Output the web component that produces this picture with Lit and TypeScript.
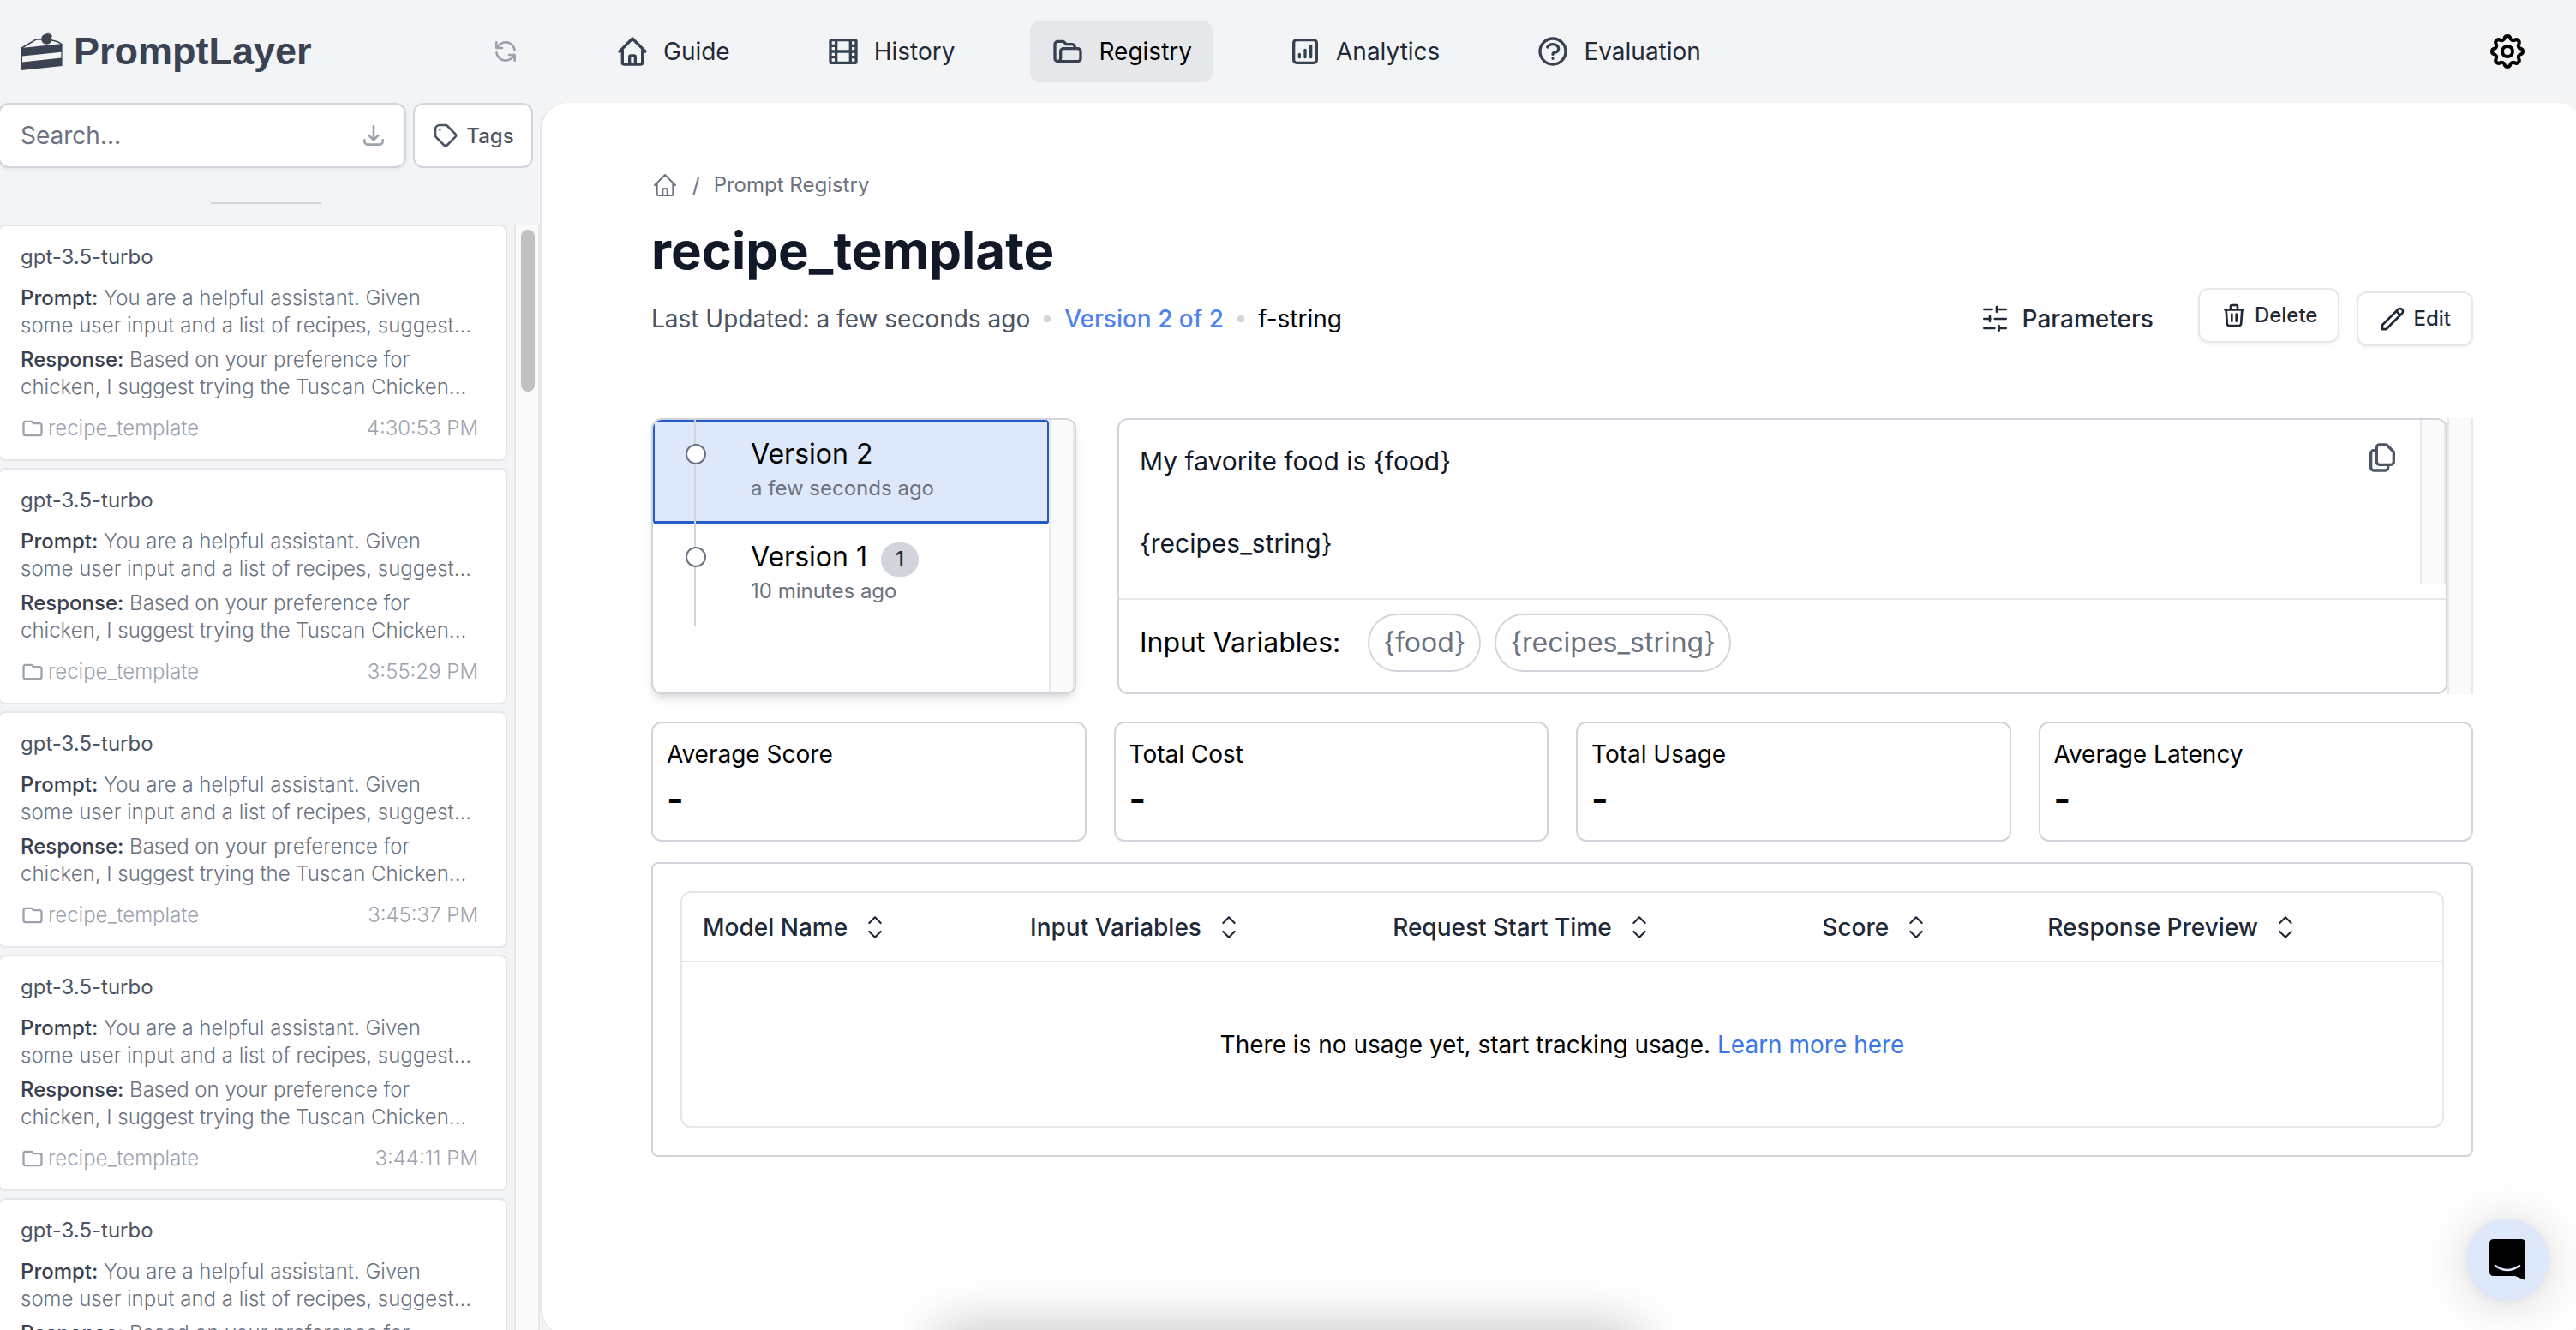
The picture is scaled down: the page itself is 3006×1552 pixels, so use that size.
import { LitElement, html, css, svg } from "lit";
import { customElement, property, state } from "lit/decorators.js";
import { classMap } from "lit/directives/class-map.js";

const ICONS: Record<string, string> = {
  home: "M3 12l2-2m0 0l7-7 7 7M5 10v10a1 1 0 001 1h3m10-11l2 2m-2-2v10a1 1 0 01-1 1h-3m-6 0a1 1 0 001-1v-4a1 1 0 011-1h2a1 1 0 011 1v4a1 1 0 001 1m-6 0h6",
  film: "M7 4v16M17 4v16M3 8h4m10 0h4M3 12h18M3 16h4m10 0h4M4 20h16a1 1 0 001-1V5a1 1 0 00-1-1H4a1 1 0 00-1 1v14a1 1 0 001 1z",
  folderOpen: "M5 19a2 2 0 01-2-2V7a2 2 0 012-2h4l2 2h4a2 2 0 012 2v1M5 19h14a2 2 0 002-2v-5a2 2 0 00-2-2H9a2 2 0 00-2 2v5a2 2 0 01-2 2z",
  chart: "M16 8v8m-4-5v5m-4-2v2m-2 4h12a2 2 0 002-2V6a2 2 0 00-2-2H6a2 2 0 00-2 2v12a2 2 0 002 2z",
  question: "M8.228 9c.549-1.165 2.03-2 3.772-2 2.21 0 4 1.343 4 3 0 1.4-1.278 2.575-3.006 2.907-.542.104-.994.54-.994 1.093m0 3h.01M21 12a9 9 0 11-18 0 9 9 0 0118 0z",
  refresh: "M4 4v5h.582m15.356 2A8.001 8.001 0 004.582 9m0 0H9m11 11v-5h-.581m0 0a8.003 8.003 0 01-15.357-2m15.357 2H15",
  download: "M4 16v1a3 3 0 003 3h10a3 3 0 003-3v-1m-4-4l-4 4m0 0l-4-4m4 4V4",
  tag: "M7 7h.01M7 3h5c.512 0 1.024.195 1.414.586l7 7a2 2 0 010 2.828l-7 7a2 2 0 01-2.828 0l-7-7A1.994 1.994 0 013 12V7a4 4 0 014-4z",
  folder: "M3 7v10a2 2 0 002 2h14a2 2 0 002-2V9a2 2 0 00-2-2h-6l-2-2H5a2 2 0 00-2 2z",
  trash: "M19 7l-.867 12.142A2 2 0 0116.138 21H7.862a2 2 0 01-1.995-1.858L5 7m5 4v6m4-6v6m1-10V4a1 1 0 00-1-1h-4a1 1 0 00-1 1v3M4 7h16",
  pencil: "M15.232 5.232l3.536 3.536m-2.036-5.036a2.5 2.5 0 113.536 3.536L6.5 21.036H3v-3.572L16.732 3.732z",
  selector: "M8 9l4-4 4 4m0 6l-4 4-4-4",
  copy: "M8 7v8a2 2 0 002 2h6M8 7V5a2 2 0 012-2h4.586a1 1 0 01.707.293l4.414 4.414a1 1 0 01.293.707V15a2 2 0 01-2 2h-2M8 7H6a2 2 0 00-2 2v10a2 2 0 002 2h8a2 2 0 002-2v-2",
  cog: "M10.325 4.317c.426-1.756 2.924-1.756 3.35 0a1.724 1.724 0 002.573 1.066c1.543-.94 3.31.826 2.37 2.37a1.724 1.724 0 001.065 2.572c1.756.426 1.756 2.924 0 3.35a1.724 1.724 0 00-1.066 2.573c.94 1.543-.826 3.31-2.37 2.37a1.724 1.724 0 00-2.572 1.065c-.426 1.756-2.924 1.756-3.35 0a1.724 1.724 0 00-2.573-1.066c-1.543.94-3.31-.826-2.37-2.37a1.724 1.724 0 00-1.065-2.572c-1.756-.426-1.756-2.924 0-3.35a1.724 1.724 0 001.066-2.573c-.94-1.543.826-3.31 2.37-2.37.996.608 2.296.07 2.572-1.065z M15 12a3 3 0 11-6 0 3 3 0 016 0z",
  sliders: "M2.5 3.75h6.9M13.5 1.6v4.3M13.5 3.75h8M2.5 12h5.3M7.5 9.9v4.2M11.8 12h9.7M2.5 20.25h9M15.4 18.1v4.3M15.4 20.25h6.1",
};

@customElement("line-icon")
export class LineIcon extends LitElement {
  static styles = css`
    :host { display: inline-flex; flex: none; width: 32px; height: 32px; }
    .glyph { width: 100%; height: 100%; fill: none; stroke: currentColor; stroke-linecap: round; stroke-linejoin: round; }
  `;
  @property() name = "home";
  @property({ type: Number }) weight = 2;

  render() {
    return html`<svg class="glyph" viewBox="0 0 24 24" aria-hidden="true" stroke-width=${this.weight}>
      ${svg`<path d=${ICONS[this.name]}></path>`}
    </svg>`;
  }
}

interface RequestEntry { time: string; }

const REQUESTS: RequestEntry[] = [
  { time: "4:30:53 PM" },
  { time: "3:55:29 PM" },
  { time: "3:45:37 PM" },
  { time: "3:44:11 PM" },
  { time: "3:41:52 PM" },
];

@customElement("request-sidebar")
export class RequestSidebar extends LitElement {
  static styles = css`
    :host { display: flex; flex-direction: column; min-height: 0; margin-left: -2px; }
    * { box-sizing: border-box; }
    button { font: inherit; color: inherit; cursor: pointer; }
    .tools { display: flex; gap: 8px; padding-right: 8px; }
    .search { flex: 1; min-width: 0; height: 76px; display: flex; align-items: center; background: #fff; border: 2px solid #d1d5db; border-radius: 12px; padding: 0 20px 0 24px; box-shadow: 0 2px 4px rgba(0, 0, 0, 0.05); }
    .field { flex: 1; min-width: 0; border: 0; outline: 0; padding: 0; background: none; font: 400 28px/40px Inter, sans-serif; color: #374151; }
    .field::placeholder { color: #6b7280; opacity: 1; }
    .plain { border: 0; background: none; padding: 0; display: flex; color: #9ca3af; }
    .tags { height: 76px; width: 140px; display: flex; align-items: center; justify-content: center; gap: 8px; background: #fff; border: 2px solid #d1d5db; border-radius: 12px; padding: 0; font-size: 24px; font-weight: 500; color: #4b5563; }
    .rule { width: 128px; height: 2px; border: 0; margin: 40px 0 24px 248px; background: #d1d5db; }
    .scroller { flex: 1; min-height: 0; display: flex; gap: 8px; overflow: hidden; }
    .list { flex: 1; min-width: 0; margin: 0; padding: 0; list-style: none; display: flex; flex-direction: column; gap: 8px; }
    .card { flex: none; background: #fff; border: 2px solid #e5e7eb; border-radius: 8px; padding: 20px 32px 20px 24px; font-size: 24px; line-height: 32px; color: #6b7280; font-weight: 300; }
    .model { margin: 0 0 16px; color: #4b5563; font-weight: 400; }
    .excerpt { margin: 0 0 8px; }
    .excerpt b { font-weight: 500; color: #374151; }
    .foot { display: flex; align-items: center; gap: 4px; margin-top: 16px; color: #9ca3af; }
    .foot line-icon { width: 28px; height: 28px; }
    .time { margin-left: auto; }
    .track { flex: none; width: 30px; background: #fafafa; border: solid #e8e8e8; border-width: 0 2px; padding: 6px 4px 6px 6px; }
    .thumb { width: 16px; height: 189px; border-radius: 8px; background: #c1c1c1; }
  `;

  render() {
    return html`
      <div class="tools">
        <div class="search">
          <input class="field" type="text" aria-label="Search requests" placeholder="Search..." />
          <button class="plain" aria-label="Download requests"><line-icon name="download"></line-icon></button>
        </div>
        <button class="tags"><line-icon name="tag"></line-icon>Tags</button>
      </div>
      <hr class="rule" />
      <div class="scroller">
        <ul class="list">
          ${REQUESTS.map((r) => html`
            <li class="card">
              <p class="model">gpt-3.5-turbo</p>
              <p class="excerpt"><b>Prompt:</b> You are a helpful assistant. Given<br />some user input and a list of recipes, suggest...</p>
              <p class="excerpt"><b>Response:</b> Based on your preference for<br />chicken, I suggest trying the Tuscan Chicken...</p>
              <div class="foot"><line-icon name="folder"></line-icon><span>recipe_template</span><span class="time">${r.time}</span></div>
            </li>`)}
        </ul>
        <div class="track"><div class="thumb"></div></div>
      </div>
    `;
  }
}

@customElement("template-page")
export class TemplatePage extends LitElement {
  static styles = css`
    :host { display: block; }
    * { box-sizing: border-box; }
    button { font: inherit; color: inherit; cursor: pointer; }
    a { text-decoration: none; color: inherit; }
    .crumbs { display: flex; align-items: center; gap: 16px; height: 32px; font-size: 24px; line-height: 32px; color: #6b7280; }
    .crumbs a { display: flex; }
    .title { margin: 24px 0 8px; font-size: 60px; line-height: 72px; font-weight: 700; color: #111827; }
    .bar { display: flex; align-items: center; justify-content: space-between; font-size: 28px; line-height: 40px; }
    .meta { display: flex; align-items: center; gap: 16px; color: #4b5563; }
    .dot { width: 8px; height: 8px; border-radius: 50%; background: #d1d5db; }
    .current { color: #4f83f1; font-weight: 500; }
    .format { color: #000; }
    .actions { display: flex; align-items: center; gap: 20px; color: #1f2937; font-weight: 500; }
    .params { display: flex; align-items: center; gap: 16px; border: 0; background: none; padding: 0; margin-right: 32px; }
    .action { height: 64px; display: flex; align-items: center; gap: 8px; background: #fff; border: 2px solid #e5e7eb; border-radius: 12px; padding: 0 24px; font-size: 24px; box-shadow: 0 2px 4px rgba(0, 0, 0, 0.05); }
    .raised { margin-bottom: 8px; }

    .panes { display: flex; gap: 48px; margin-top: 80px; }
    .versions { width: 496px; flex: none; display: flex; background: #fff; border: 2px solid #d1d5db; border-radius: 12px; overflow: hidden; box-shadow: 0 8px 12px -2px rgba(0, 0, 0, 0.1), 0 4px 8px -4px rgba(0, 0, 0, 0.1); }
    .timeline { flex: 1; margin: 0; padding: 0; list-style: none; }
    .entry { position: relative; }
    .entry::after { content: ""; position: absolute; top: 0; bottom: 0; left: 48px; width: 2px; background: #d1d5db; }
    .pick { width: 100%; height: 120px; display: flex; align-items: flex-start; text-align: left; background: none; border: 2px solid transparent; border-radius: 4px; padding: 16px 24px 0 36px; gap: 52px; }
    .pick.on { background: #dee8fb; border-color: #255bc9; height: 122px; margin-bottom: -2px; border-bottom-width: 4px; }
    .node { position: relative; z-index: 1; flex: none; width: 24px; height: 24px; margin-top: 10px; border: 2px solid #6b7280; border-radius: 50%; background: #fff; }
    .label { display: flex; align-items: baseline; gap: 16px; height: 44px; font-size: 32px; line-height: 44px; color: #000; }
    .count { min-width: 44px; height: 40px; border-radius: 20px; background: #d1d5db; font-size: 24px; line-height: 40px; font-weight: 500; text-align: center; color: #1f2937; }
    .when { display: block; font-size: 24px; line-height: 36px; color: #6b7280; }
    .track { flex: none; width: 30px; background: #fafafa; border: solid #e8e8e8; border-width: 0 2px; }

    .right { flex: 1; min-width: 0; display: flex; }
    .editor { flex: 1; min-width: 0; border: 2px solid #d1d5db; border-radius: 12px; overflow: hidden; font-size: 32px; color: #111827; }
    .source { display: flex; margin-bottom: 16px; }
    .code { flex: 1; margin: 0; padding: 24px; font: inherit; font-size: 30px; line-height: 48px; white-space: pre-wrap; }
    .copy { align-self: flex-start; border: 0; background: none; padding: 24px 24px 0 0; color: #4b5563; display: flex; }
    .copy line-icon { width: 40px; height: 40px; }
    .inputs { display: flex; align-items: center; gap: 16px; border-top: 2px solid #e5e7eb; padding: 16px 24px 24px; line-height: 48px; color: #000; }
    .inputs-label { margin-right: 16px; }
    .pill { border: 2px solid #d1d5db; border-radius: 34px; padding: 8px 16px; color: #6b7280; }

    .stats { display: grid; grid-template-columns: repeat(4, 1fr); gap: 32px; margin: 32px 0 24px; }
    .stat { margin: 0; border: 2px solid #d1d5db; border-radius: 12px; padding: 16px; font-size: 28px; line-height: 40px; color: #000; }
    .stat dt, .stat dd { margin: 0; }
    .stat dd { font-size: 42px; line-height: 64px; font-weight: 700; }

    .usage { border: 2px solid #d1d5db; border-radius: 8px; padding: 32px; }
    .frame { border: 2px solid #e5e7eb; border-radius: 12px; overflow: hidden; }
    .table { width: 100%; border-collapse: collapse; table-layout: fixed; font-size: 28px; line-height: 40px; }
    .table th { height: 80px; padding: 0 24px; border-bottom: 2px solid #e5e7eb; text-align: left; font-weight: 500; color: #1f2937; }
    .c1 { width: 18.6%; } .c2 { width: 20.6%; } .c3 { width: 24.4%; } .c4 { width: 12.8%; } .c5 { width: 23.6%; }
    .sort { display: flex; align-items: center; gap: 12px; border: 0; padding: 0; background: none; white-space: nowrap; }
    .sort line-icon { width: 40px; height: 40px; }
    .table td { height: 192px; padding: 0; text-align: center; color: #000; }
    .learn { color: #3b78e7; }
  `;

  @state() private selected = 2;

  render() {
    const columns = ["Model Name", "Input Variables", "Request Start Time", "Score", "Response Preview"];
    const stats = ["Average Score", "Total Cost", "Total Usage", "Average Latency"];
    const versions = [
      { id: 2, when: "a few seconds ago", count: 0 },
      { id: 1, when: "10 minutes ago", count: 1 },
    ];
    return html`
      <nav class="crumbs" aria-label="Breadcrumb">
        <a href="#home" aria-label="Home"><line-icon name="home" weight="1.5"></line-icon></a>
        <span>/</span>
        <a href="#registry">Prompt Registry</a>
      </nav>
      <h1 class="title">recipe_template</h1>
      <div class="bar">
        <div class="meta">
          <span>Last Updated: a few seconds ago</span><span class="dot"></span>
          <span class="current">Version 2 of 2</span><span class="dot"></span>
          <span class="format">f-string</span>
        </div>
        <div class="actions">
          <button class="params"><line-icon name="sliders"></line-icon>Parameters</button>
          <button class="action raised"><line-icon name="trash"></line-icon>Delete</button>
          <button class="action"><line-icon name="pencil"></line-icon>Edit</button>
        </div>
      </div>

      <section class="panes">
        <div class="versions">
          <ol class="timeline">
            ${versions.map((v) => html`
              <li class="entry">
                <button class=${classMap({ pick: true, on: v.id === this.selected })} @click=${() => (this.selected = v.id)}>
                  <span class="node"></span>
                  <span>
                    <span class="label">Version ${v.id}${v.count ? html`<span class="count">${v.count}</span>` : ""}</span>
                    <span class="when">${v.when}</span>
                  </span>
                </button>
              </li>`)}
          </ol>
          <div class="track"></div>
        </div>
        <div class="right">
          <div class="editor">
            <div class="source">
              <pre class="code">My favorite food is {food}

{recipes_string}</pre>
              <button class="copy" aria-label="Copy template"><line-icon name="copy"></line-icon></button>
              <div class="track"></div>
            </div>
            <div class="inputs">
              <span class="inputs-label">Input Variables:</span>
              <span class="pill">{food}</span>
              <span class="pill">{recipes_string}</span>
            </div>
          </div>
          <div class="track"></div>
        </div>
      </section>

      <section class="stats">
        ${stats.map((s) => html`<dl class="stat"><dt>${s}</dt><dd>-</dd></dl>`)}
      </section>

      <section class="usage">
        <div class="frame">
          <table class="table">
            <thead>
              <tr>
                ${columns.map((c, i) => html`<th class="c${i + 1}" scope="col"><button class="sort">${c}<line-icon name="selector" weight="1.3"></line-icon></button></th>`)}
              </tr>
            </thead>
            <tbody>
              <tr><td colspan="5">There is no usage yet, start tracking usage. <a class="learn" href="#docs">Learn more here</a></td></tr>
            </tbody>
          </table>
        </div>
      </section>
    `;
  }
}

@customElement("app-root")
export class AppRoot extends LitElement {
  static styles = css`
    :host { display: grid; grid-template: 120px minmax(0, 1fr) / 630px minmax(0, 1fr); height: 100vh; overflow: hidden; background: #f3f4f6; font-family: Inter, sans-serif; position: relative; }
    * { box-sizing: border-box; }
    a { text-decoration: none; color: inherit; }
    .brand { display: flex; align-items: center; justify-content: space-between; padding: 0 24px 0 22px; color: #3b4252; }
    .logo { display: flex; align-items: center; gap: 10px; font: 700 45px/52px "Liberation Sans", sans-serif; color: #3b4252; }
    .cake { width: 54px; height: 48px; flex: none; }
    .plain { border: 0; background: none; padding: 0; display: flex; cursor: pointer; color: #9ca3af; }
    .top { display: flex; align-items: center; justify-content: space-between; padding: 0 56px 0 64px; }
    .nav { display: flex; gap: 64px; }
    .link { display: flex; align-items: center; gap: 16px; height: 72px; padding: 0 24px; border-radius: 12px; font-size: 28px; line-height: 40px; color: #1f2937; }
    .link line-icon { width: 40px; height: 40px; color: #374151; }
    .link.on { background: #e5e7eb; color: #000; }
    .gear { color: #000; }
    .gear line-icon { width: 48px; height: 48px; }
    .panel { background: #fff; border-left: 2px solid #e5e7eb; border-radius: 32px; margin: 0 -10px -6px 0; padding: 80px 130px 0 128px; overflow: hidden; }
    .chat { position: absolute; right: 32px; bottom: 34px; width: 96px; height: 96px; border: 0; border-radius: 50%; padding: 0; background: #dee8fb; display: flex; align-items: center; justify-content: center; cursor: pointer; box-shadow: 0 2px 12px rgba(0, 0, 0, 0.06), 0 4px 64px rgba(0, 0, 0, 0.16); }
    .bubble { width: 42px; height: 48px; }
    .toast-shade { position: absolute; left: 50%; bottom: -60px; width: 820px; height: 60px; margin-left: -410px; border-radius: 16px; box-shadow: 0 0 64px rgba(0, 0, 0, 0.27); }
  `;

  render() {
    const links = [
      ["home", "Guide"],
      ["film", "History"],
      ["folderOpen", "Registry"],
      ["chart", "Analytics"],
      ["question", "Evaluation"],
    ];
    return html`
      <div class="brand">
        <a class="logo" href="#top">
          <svg class="cake" viewBox="22 34 54 48" aria-hidden="true">
            <path d="M24.5 54L72.6 49V75L24.5 80Z" fill="#3b4252"></path>
            <path d="M26 63.6L71.4 58.8V65.6L26 70.6Z" fill="#f3f4f6"></path>
            <path d="M24.5 54.5L42 44H49M60 45Q68 46 72.3 50" fill="none" stroke="#3b4252" stroke-width="1.6"></path>
            <circle cx="54.4" cy="43.6" r="6.2" fill="#3b4252"></circle>
            <path d="M54.5 38L56.2 36.2L60.8 40.5" fill="none" stroke="#3b4252" stroke-width="1.2"></path>
          </svg>
          PromptLayer
        </a>
        <button class="plain" aria-label="Refresh"><line-icon name="refresh"></line-icon></button>
      </div>
      <header class="top">
        <nav class="nav">
          ${links.map(([icon, label]) => html`
            <a class=${classMap({ link: true, on: label === "Registry" })} href="#${label.toLowerCase()}"><line-icon name=${icon}></line-icon>${label}</a>`)}
        </nav>
        <button class="plain gear" aria-label="Settings"><line-icon name="cog"></line-icon></button>
      </header>
      <request-sidebar></request-sidebar>
      <main class="panel"><template-page></template-page></main>
      <div class="toast-shade"></div>
      <button class="chat" aria-label="Open chat">
        <svg class="bubble" viewBox="0 0 42 48" aria-hidden="true">
          <path d="M5 0H37Q42 0 42 5V48L30 43H5Q0 43 0 38V5Q0 0 5 0Z" fill="#000"></path>
          <path d="M7 31Q21 41 35 31" fill="none" stroke="#dee8fb" stroke-width="2.6" stroke-linecap="round"></path>
        </svg>
      </button>
    `;
  }
}
